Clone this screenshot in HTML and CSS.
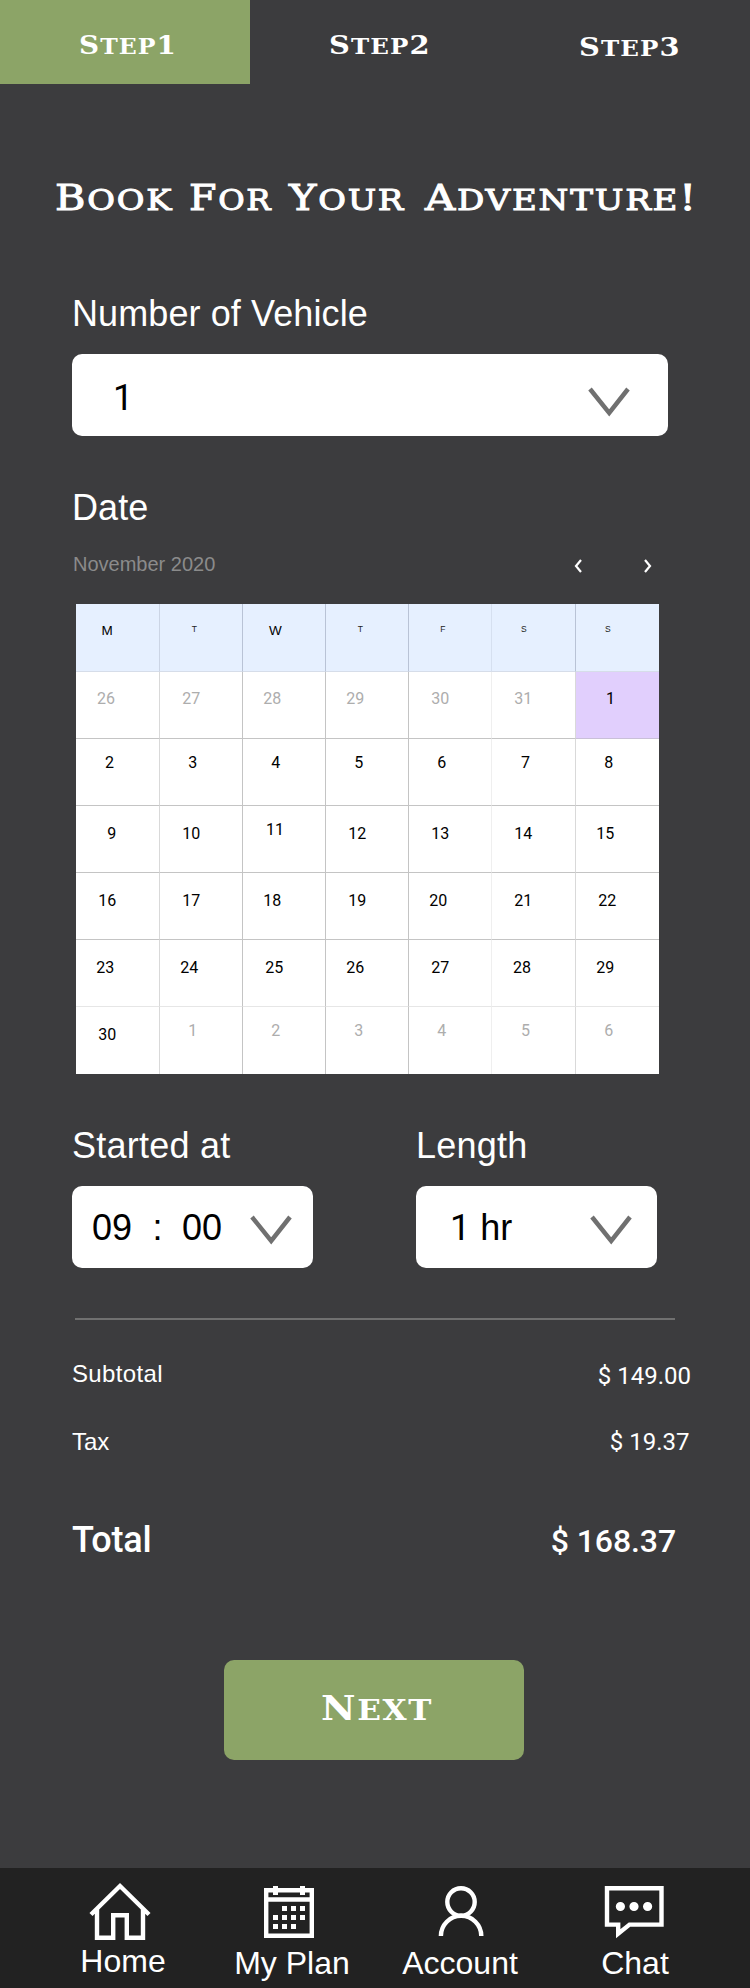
FILE: index.html
```html
<!DOCTYPE html>
<html lang="en">
<head>
<meta charset="utf-8">
<title>Book For Your Adventure!</title>
<link rel="stylesheet" href="styles.css">
</head>
<body>
<header class="steps">
  <div class="step active"><span class="step-text first"><span class="cap">S</span>TEP<span class="cap">1</span></span></div>
  <div class="step"><span class="step-text"><span class="cap">S</span>TEP<span class="cap">2</span></span></div>
  <div class="step low"><span class="step-text"><span class="cap">S</span>TEP<span class="cap">3</span></span></div>
</header>
<main>
  <h1 class="title">
    <span class="w-book"><span class="cap">B</span>OOK</span>
    <span class="w-for"><span class="cap">F</span>OR</span>
    <span class="w-your"><span class="cap">Y</span>OUR</span>
    <span class="w-adv"><span class="cap">A</span>DVENTURE<span class="cap">!</span></span>
  </h1>

  <div class="label vehicle">Number of Vehicle</div>
  <div class="select wide">
    <span class="digits">1</span>
    <svg class="chev" width="42" height="30" viewBox="0 0 42 30"><path d="M2 2 L21.2 26 L40 2"/></svg>
  </div>

  <div class="label date">Date</div>
  <div class="month">
    <span>November 2020</span>
    <svg class="arrows" width="80" height="14" viewBox="0 0 80 14"><path d="M8 1 L3 7 L8 13 M72 1 L77 7 L72 13"/></svg>
  </div>

  <div class="calendar">
    <div class="row head">
      <div class="cell big m">M</div><div class="cell x32">T</div><div class="cell big x26">W</div><div class="cell x32">T</div><div class="cell x31">F</div><div class="cell x29">S</div><div class="cell x29">S</div>
    </div>
    <div class="row r1 muted">
      <div class="cell x21">26</div><div class="cell x22">27</div><div class="cell x20">28</div><div class="cell x20">29</div><div class="cell x22">30</div><div class="cell x22">31</div><div class="cell x30 picked">1</div>
    </div>
    <div class="row r2">
      <div class="cell x29">2</div><div class="cell x28">3</div><div class="cell x28">4</div><div class="cell x28">5</div><div class="cell x28">6</div><div class="cell x29">7</div><div class="cell x28">8</div>
    </div>
    <div class="row">
      <div class="cell x31">9</div><div class="cell x22">10</div><div class="cell x23 up">11</div><div class="cell x22">12</div><div class="cell x22">13</div><div class="cell x22">14</div><div class="cell x20">15</div>
    </div>
    <div class="row">
      <div class="cell x22">16</div><div class="cell x22">17</div><div class="cell x20">18</div><div class="cell x22">19</div><div class="cell x20">20</div><div class="cell x22">21</div><div class="cell x22">22</div>
    </div>
    <div class="row r5">
      <div class="cell x20">23</div><div class="cell x20">24</div><div class="cell x22">25</div><div class="cell x20">26</div><div class="cell x22">27</div><div class="cell x21">28</div><div class="cell x20">29</div>
    </div>
    <div class="row last muted">
      <div class="cell x22 own">30</div><div class="cell x28">1</div><div class="cell x28">2</div><div class="cell x28">3</div><div class="cell x28">4</div><div class="cell x29">5</div><div class="cell x28">6</div>
    </div>
  </div>

  <div class="fields">
    <div class="field">
      <div class="label">Started at</div>
      <div class="select start">
        <span class="hour">09</span><span class="colon">:</span><span>00</span>
        <svg class="chev" width="42" height="30" viewBox="0 0 42 30"><path d="M2 2 L21.2 26 L40 2"/></svg>
      </div>
    </div>
    <div class="field">
      <div class="label">Length</div>
      <div class="select length">
        <span><span class="digits">1</span> hr</span>
        <svg class="chev" width="42" height="30" viewBox="0 0 42 30"><path d="M2 2 L21.2 26 L40 2"/></svg>
      </div>
    </div>
  </div>

  <div class="summary">
    <div class="line subtotal"><span>Subtotal</span><span class="amount">$ 149.00</span></div>
    <div class="line tax"><span>Tax</span><span class="amount">$ 19.37</span></div>
    <div class="line total"><span>Total</span><span class="amount">$ 168.37</span></div>
  </div>

  <div class="next"><span class="next-text"><span class="cap">N</span>EXT</span></div>
</main>

<nav class="tabs">
  <div class="tab home">
    <svg width="64" height="60" viewBox="88 1881 64 60"><path d="M91 1914.5 L120 1886 L149 1914.5 M97 1909 V1937.8 H113.2 V1915.2 H126.8 V1937.8 H143 V1909"/></svg>
    <span>Home</span>
  </div>
  <div class="tab plan">
    <svg width="64" height="60" viewBox="257 1881 64 60"><path d="M266.2 1890.2 H311.8 V1935.8 H266.2 Z M266 1899.5 H312"/><path class="fill" d="M273 1886h5v9h-5z M300 1886h5v9h-5z M282 1906h5v5h-5z M291 1906h5v5h-5z M300 1906h5v5h-5z M273 1915h5v5h-5z M282 1915h5v5h-5z M291 1915h5v5h-5z M300 1915h5v5h-5z M273 1924h5v5h-5z M282 1924h5v5h-5z M291 1924h5v5h-5z"/></svg>
    <span>My Plan</span>
  </div>
  <div class="tab account">
    <svg width="64" height="60" viewBox="429 1881 64 60"><circle cx="461" cy="1902" r="13.7"/><path d="M440.9 1936 A20.2 20.2 0 0 1 481.3 1936"/></svg>
    <span>Account</span>
  </div>
  <div class="tab chat">
    <svg width="64" height="60" viewBox="602 1881 64 60"><path d="M607 1888.2 H661.5 V1924.6 H629.5 L618.2 1933.6 V1924.6 H607 Z"/><path class="fill" d="M615.8 1906.5a4.6 4.6 0 1 0 9.2 0a4.6 4.6 0 1 0 -9.2 0z M629.4 1906.5a4.6 4.6 0 1 0 9.2 0a4.6 4.6 0 1 0 -9.2 0z M643 1906.5a4.6 4.6 0 1 0 9.2 0a4.6 4.6 0 1 0 -9.2 0z"/></svg>
    <span>Chat</span>
  </div>
</nav>
</body>
</html>
```
FILE: styles.css
```css
* { box-sizing: border-box; }

body {
  margin: 0;
  width: 750px;
  height: 1988px;
  display: flex;
  flex-direction: column;
  background: #3c3c3e;
  color: #fff;
  font-family: "Liberation Sans", sans-serif;
  white-space: nowrap;
}

svg { display: block; flex: none; fill: none; stroke: #fff; }
.digits { font-family: Roboto, sans-serif; }

/* step tabs */
.steps { display: flex; height: 84px; }
.step {
  width: 250px;
  height: 84px;
  padding: 30px 0 0 79px;
  font: bold 22px/30px "DejaVu Serif", serif;
  letter-spacing: 1px;
}
.step .cap { font-size: 26px; }
.step-text { display: inline-block; transform: scaleX(1.11); transform-origin: left; }
.step-text.first { transform: scaleX(1.07); }
.step.active { background: #8ca467; }
.step.low { padding-top: 32px; }

/* title */
main { flex: 1; display: flex; flex-direction: column; }
.title {
  display: flex;
  height: 40px;
  margin: 94px 0 0 55px;
  font: normal 28.5px/40px "DejaVu Serif", serif;
  -webkit-text-stroke: 1px #fff;
  letter-spacing: 1.5px;
}
.title .cap { font-size: 35px; }
.title > span { transform-origin: left; }
.w-book { width: 134px; transform: scaleX(1.185); }
.w-for { width: 100px; transform: scaleX(1.13); }
.w-your { width: 136px; transform: scaleX(1.185); }
.w-adv { width: 275px; transform: scaleX(1.195); }

/* fields */
.label { font-size: 36px; line-height: 40px; letter-spacing: 0.1px; }
.vehicle { margin: 76px 0 0 72px; }
.date { margin: 52px 0 0 72px; }
.select {
  display: flex;
  height: 82px;
  padding-top: 24px;
  background: #fff;
  border-radius: 10px;
  color: #000;
  font-size: 36px;
  line-height: 40px;
}
.chev { margin-left: auto; stroke: #707070; stroke-width: 4.5; }
.wide { width: 596px; margin: 20px 0 0 72px; padding-left: 41px; padding-right: 38px; }
.wide .chev { margin-top: 8.5px; }

.month {
  display: flex;
  height: 24px;
  margin: 24px 91px 28px 73px;
  justify-content: space-between;
  align-items: center;
  font-size: 20px;
  line-height: 24px;
  color: #8b8b8b;
}
.arrows { margin: 3px 6.5px 0 0; stroke-width: 2.2; }

/* calendar */
.calendar {
  width: 582.5px;
  height: 470px;
  margin-left: 76px;
  background: #fff;
  color: #000;
  font: 16px/20px Roboto, sans-serif;
}
.row {
  display: grid;
  grid-template-columns: 84px 83px 83px 83px 83px 84px 1fr;
  height: 67px;
}
.cell { padding-top: 18px; border-right: 1px solid #c4c4c4; border-bottom: 1px solid #c4c4c4; }
.cell:first-child, .cell:nth-child(6) { border-right-color: #d9d9d9; }
.cell:nth-child(5) { border-right-color: #efefef; }
.cell:last-child { border-right: 0; }
.head { height: 68px; background: #e6f0ff; font: 8.5px/20px "Liberation Sans", sans-serif; color: #222; }
.head .cell { padding-top: 15px; border-color: #b9c3d6; border-bottom-color: #d6dde9; }
.head .cell:first-child { border-right-color: #ccd5e5; }
.head .cell:nth-child(5) { border-right-color: #d6e0f0; }
.head .big { font-size: 13.5px; padding-top: 17px; color: #000; }
.m { padding-left: 25.5px; }
.r1 .cell { padding-top: 17px; }
.r2 .cell { padding-top: 14px; }
.r5 .cell { border-bottom-color: #e6e6e6; }
.last .cell { border-bottom: 0; padding-top: 14px; }
.last .own { padding-top: 18px; color: #000; }
.muted { color: #adadad; }
.row .picked { background: #e1cffd; color: #000; border-bottom-color: #c9c0d8; }
.row .up { padding-top: 14px; }
.x20 { padding-left: 20.3px; }
.x21 { padding-left: 21px; }
.x22 { padding-left: 22.3px; }
.x23 { padding-left: 23px; }
.x26 { padding-left: 26px; }
.x28 { padding-left: 28.3px; }
.x29 { padding-left: 29px; }
.x30 { padding-left: 30px; }
.x31 { padding-left: 31.3px; }
.x32 { padding-left: 31.8px; }

/* start and length */
.fields { display: flex; gap: 103.5px; margin: 52px 0 0 72px; }
.field { width: 240.5px; }
.field .label { letter-spacing: 0.25px; }
.field .select { margin-top: 20px; padding-top: 22px; }
.field .chev { margin-top: 6.5px; }
.start { padding-left: 20px; padding-right: 21px; }
.hour { width: 60.5px; }
.colon { width: 29.5px; }
.length { padding-left: 34px; padding-right: 25px; }

/* price summary */
.summary {
  width: 600px;
  margin: 50px 0 0 75px;
  padding-top: 40px;
  border-top: 2px solid #707070;
  font-size: 24px;
  line-height: 28px;
}
.line { display: flex; justify-content: space-between; margin-left: -3px; }
.amount { font-family: Roboto, sans-serif; }
.subtotal { margin-right: -16px; }
.subtotal > span:first-child { letter-spacing: 0.35px; }
.subtotal .amount { padding-top: 2px; margin-bottom: -2px; }
.tax { margin: 40px -14.5px 0 -3px; }
.total { margin: 64px -1px 0 -3px; font: 500 36px/40px Roboto, sans-serif; }
.total > span:first-child { letter-spacing: -0.2px; }
.total .amount { font-size: 32px; letter-spacing: -0.1px; padding-top: 1px; margin-bottom: -1px; }

.next {
  width: 300px;
  height: 100px;
  margin: 100px 0 0 224px;
  padding: 28px 0 0 97px;
  border-radius: 10px;
  background: #8ca467;
  font: bold 28px/40px "DejaVu Serif", serif;
  letter-spacing: 1.5px;
}
.next .cap { font-size: 34px; }
.next-text { display: inline-block; transform: scaleX(1.11); transform-origin: left; }

/* bottom navigation */
.tabs {
  display: flex;
  height: 120px;
  padding-top: 13px;
  background: #222;
  font-size: 32px;
  line-height: 36px;
}
.tab { display: flex; flex-direction: column; align-items: center; }
.tab svg { stroke-width: 4.4; }
.tab .fill { fill: #fff; stroke: none; }
.tab span { margin-top: 4px; }
.home { width: 86px; margin-left: 80px; }
.home span { margin-top: 2px; }
.home svg { margin-right: 6px; }
.plan { width: 116px; margin-left: 68px; }
.plan svg { margin-right: 6px; }
.account { width: 118px; margin-left: 51px; }
.account svg { margin-left: 2px; }
.chat { width: 70px; margin-left: 81px; }
.chat svg { margin-right: 3px; }
```
